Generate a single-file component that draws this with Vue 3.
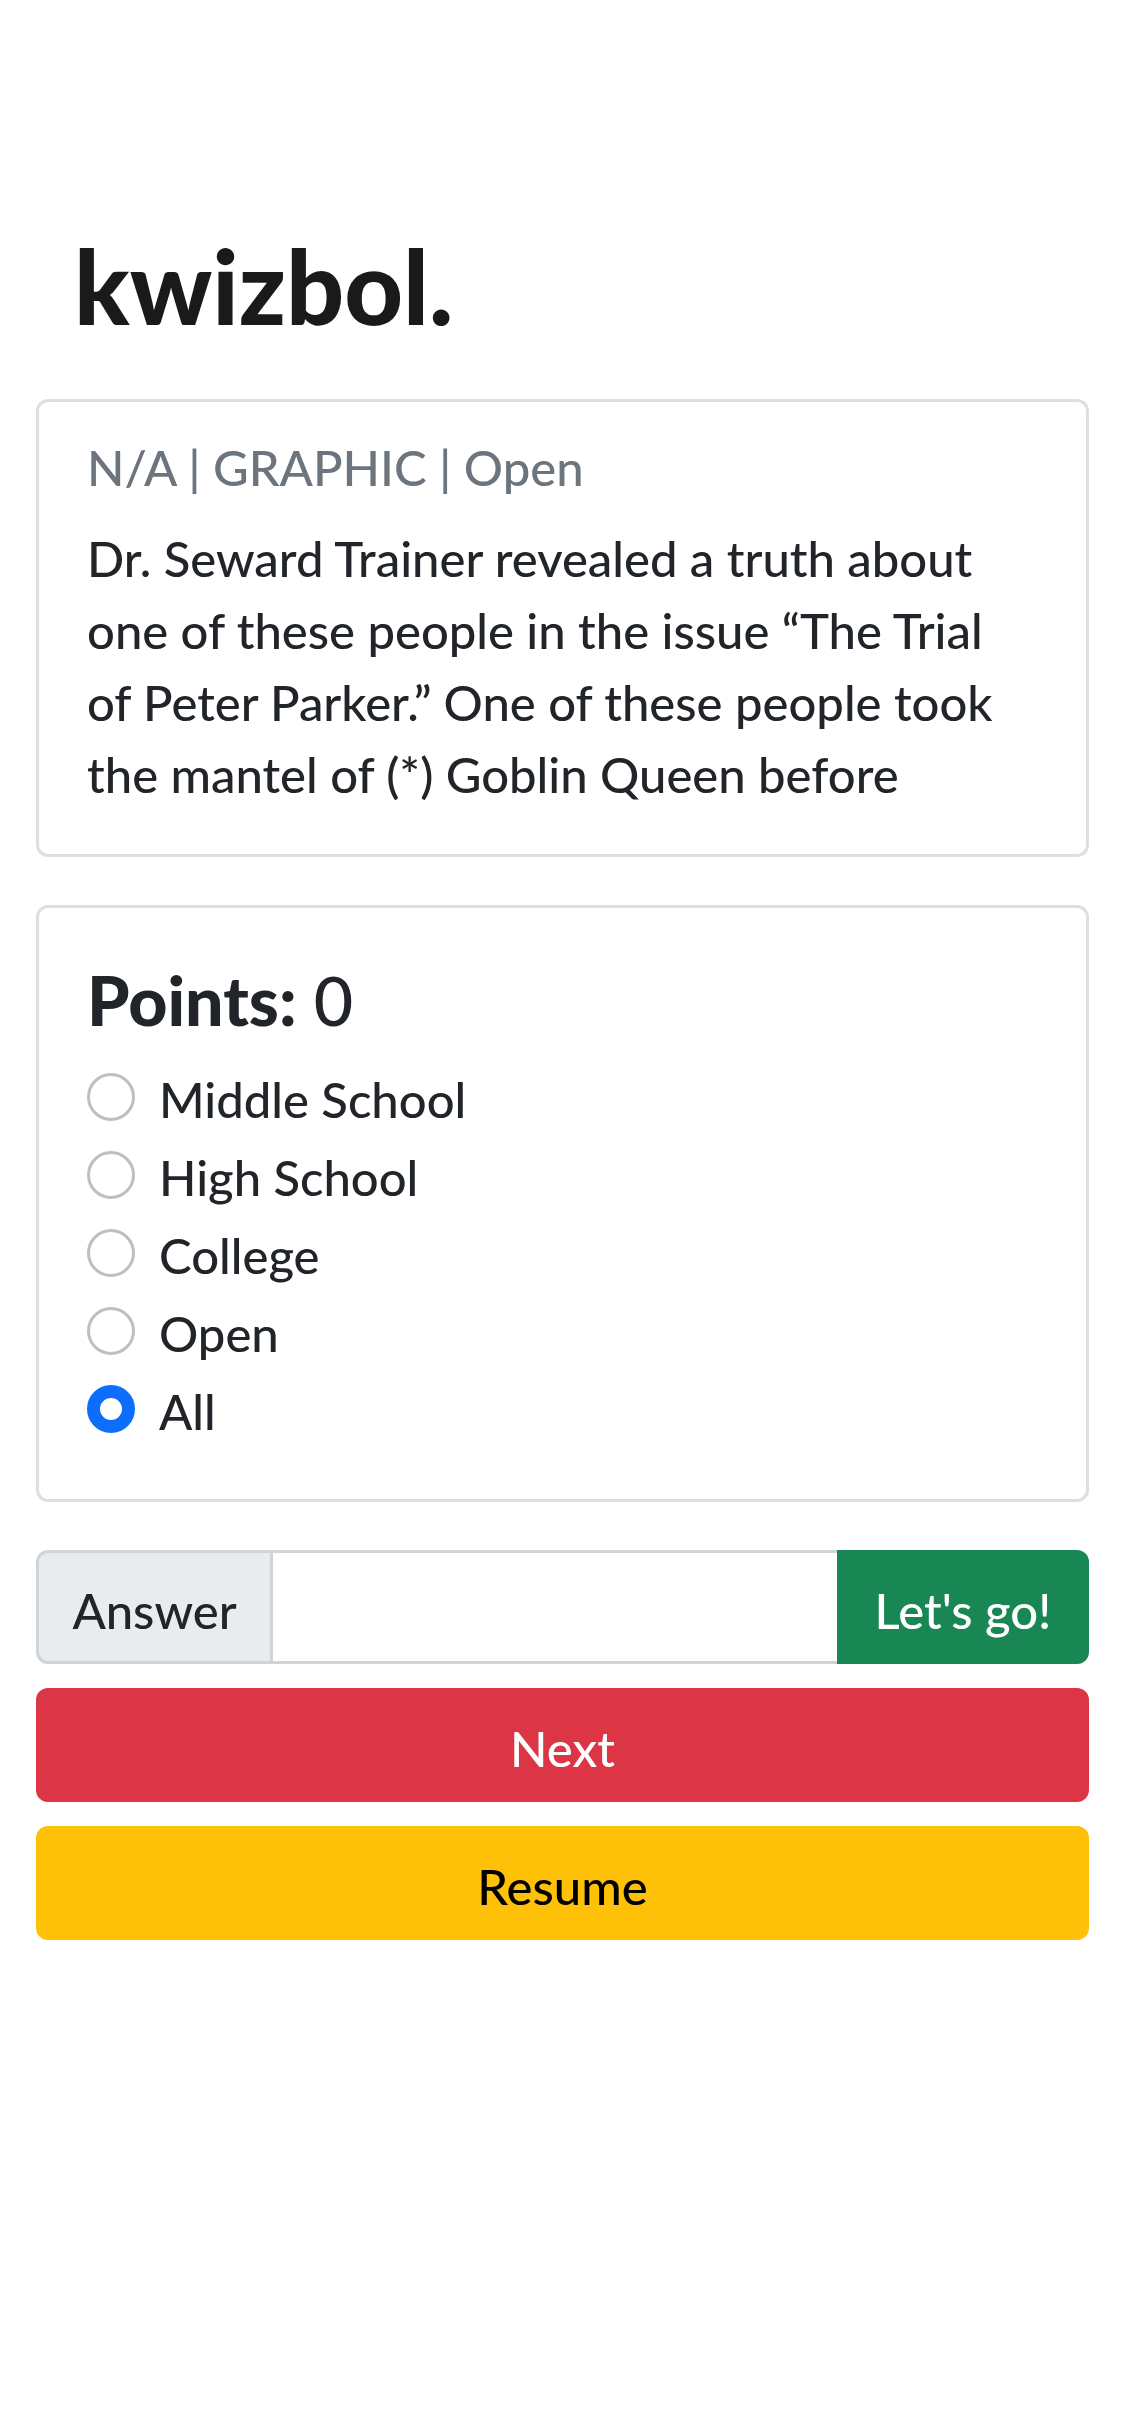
<script setup>
import { ref } from 'vue'

const points = ref(0)
const level = ref('All')
const answer = ref('')
const levels = ['Middle School', 'High School', 'College', 'Open', 'All']
const lines = [
  'Dr. Seward Trainer revealed a truth about',
  'one of these people in the issue “The Trial',
  'of Peter Parker.” One of these people took',
  'the mantel of (*) Goblin Queen before',
]
</script>

<template>
  <main class="page">
    <h1 class="brand">kwizbol.</h1>

    <section class="card question">
      <h2 class="subtitle">N/A | GRAPHIC | Open</h2>
      <p class="body">
        <span v-for="line in lines" :key="line" class="line">{{ line }}</span>
      </p>
    </section>

    <section class="card">
      <h3 class="points"><strong>Points:</strong> {{ points }}</h3>
      <div v-for="(item, i) in levels" :key="item" class="check">
        <input :id="'level-' + i" v-model="level" type="radio" name="level" :value="item" />
        <label :for="'level-' + i">{{ item }}</label>
      </div>
    </section>

    <form class="controls" @submit.prevent>
      <div class="group">
        <label class="addon" for="answer">Answer</label>
        <input id="answer" v-model="answer" class="field" type="text" autocomplete="off" />
        <button class="btn go" type="submit">Let's go!</button>
      </div>
      <button class="btn next" type="button">Next</button>
      <button class="btn resume" type="button">Resume</button>
    </form>
  </main>
</template>

<style>
body {
  background: #fff;
}
</style>

<style scoped>
.page {
  box-sizing: border-box;
  padding: 224px 36px 48px;
  display: flex;
  flex-direction: column;
  gap: 48px;
  font-family: Lato, "Open Sans", sans-serif;
  font-size: 49px;
  font-weight: 500;
  line-height: 72px;
  color: #212529;
}
.page * {
  box-sizing: border-box;
}
.brand {
  margin: 0;
  padding: 0 0 4px 38px;
  font-size: 102px;
  font-weight: 900;
  line-height: 123px;
  color: #1a1a1a;
}
.card {
  padding: 48px;
  border: 3px solid #dfdfdf;
  border-radius: 12px;
}
.question {
  padding: 36px 48px 44px;
}
.subtitle {
  margin: 0 0 26px;
  font-size: 49px;
  font-weight: 500;
  line-height: 58px;
  color: #6c757d;
}
.body {
  margin: 0;
}
.line {
  display: block;
  white-space: nowrap;
}
.points {
  margin: 0 0 18px;
  font-size: 68px;
  font-weight: 500;
  line-height: 87px;
}
.points strong {
  font-weight: 900;
}
.check {
  display: flex;
  align-items: flex-start;
  gap: 24px;
  margin-bottom: 6px;
}
.check label {
  padding-top: 4px;
  line-height: 68px;
}
.check input {
  appearance: none;
  flex: none;
  width: 48px;
  height: 48px;
  margin: 12px 0 0;
  border: 3px solid #bfbfbf;
  border-radius: 50%;
  background: #fff;
}
.check input:checked {
  border: 13px solid #0d6efd;
}
.controls {
  display: flex;
  flex-direction: column;
  gap: 24px;
}
.group {
  display: flex;
  height: 114px;
}
.addon,
.btn {
  padding: 6px 0 0;
  border-radius: 12px;
  font: inherit;
  text-align: center;
}
.addon {
  flex: none;
  width: 237px;
  padding-top: 21px;
  border: 3px solid #ced4da;
  border-radius: 12px 0 0 12px;
  background: #e9ecef;
}
.field {
  flex: 1;
  min-width: 0;
  padding: 0 36px;
  border: 3px solid #ced4da;
  border-width: 3px 0;
  border-radius: 0;
  background: #fff;
  font: inherit;
  color: inherit;
}
.btn {
  height: 114px;
  border: 0;
  color: #fff;
}
.go {
  flex: none;
  width: 252px;
  border-radius: 0 12px 12px 0;
  background: #198754;
}
.next {
  background: #dc3545;
}
.resume {
  background: #ffc107;
  color: #000;
}
</style>
